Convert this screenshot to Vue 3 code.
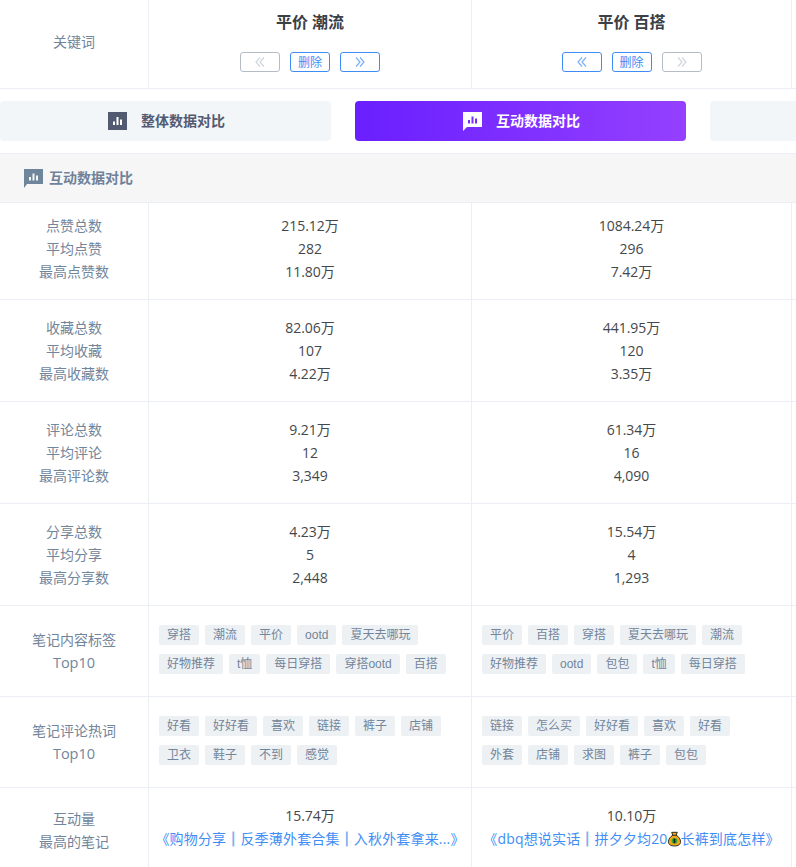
<template>
  <div class="page">
    <div class="row head-row">
      <div class="label">关键词</div>
      <div v-for="(k, i) in keywords" :key="k" class="cell head-cell">
        <div class="kw-title">{{ k }}</div>
        <div class="kw-btns">
          <button class="kw-btn" :class="{ off: i === 0 }">
            <svg viewBox="0 0 10 10" width="10" height="10"><path d="M5 .5 1 5l4 4.500M9 .5 5 5l4 4.500" /></svg>
          </button>
          <button class="kw-btn">删除</button>
          <button class="kw-btn" :class="{ off: i === 1 }">
            <svg viewBox="0 0 10 10" width="10" height="10"><path d="M1 .5 5 5 1 9.500M5 .5 9 5 5 9.500" /></svg>
          </button>
        </div>
      </div>
      <div class="cell"></div>
    </div>

    <div class="tabs">
      <div class="tab">
        <svg class="tab-icon" viewBox="0 0 19 18"><rect width="19" height="18" fill="#525a72" /><path d="M5 9.500h2V13H5zM8.500 5h2v8h-2zM12 7.500h2V13h-2z" fill="#fff" /></svg>
        <span>整体数据对比</span>
      </div>
      <div class="tab active">
        <svg class="tab-icon" viewBox="0 0 19 19"><path d="M0 0h19v15H4l-4 4z" fill="#fff" /><path d="M5 8h2v3.500H5zM8.500 4.500h2v7h-2zM12 6.500h2v5h-2z" fill="#7a2dff" /></svg>
        <span>互动数据对比</span>
      </div>
      <div class="tab"></div>
    </div>

    <div class="section">
      <svg class="section-icon" viewBox="0 0 19 19"><path d="M0 0h19v15H3l-3 4z" fill="#6f859c" /><path d="M5 8h2v3.500H5zM8.500 4.500h2v7h-2zM12 6.500h2v5h-2z" fill="#f6f6f7" /></svg>
      <span>互动数据对比</span>
    </div>

    <div v-for="(s, i) in stats" :key="s.labels[0]" class="row stat-row" :class="{ first: i === 0 }">
      <div class="label"><div v-for="l in s.labels" :key="l">{{ l }}</div></div>
      <div class="cell value"><div v-for="v in s.a" :key="v">{{ v }}</div></div>
      <div class="cell value"><div v-for="v in s.b" :key="v">{{ v }}</div></div>
      <div class="cell"></div>
    </div>

    <div v-for="t in tagRows" :key="t.label" class="row tag-row">
      <div class="label"><div>{{ t.label }}</div><div class="top10">Top10</div></div>
      <div class="cell tags"><span v-for="x in t.a" :key="x" class="tag">{{ x }}</span></div>
      <div class="cell tags"><span v-for="x in t.b" :key="x" class="tag">{{ x }}</span></div>
      <div class="cell"></div>
    </div>

    <div class="row note-row">
      <div class="label"><div>互动量</div><div>最高的笔记</div></div>
      <div class="cell note">
        <div>15.74万</div>
        <a class="note-link">《购物分享<b>｜</b>反季薄外套合集<b>｜</b>入秋外套拿来...》</a>
      </div>
      <div class="cell note">
        <div>10.10万</div>
        <a class="note-link">《dbq想说实话<b>｜</b>拼夕夕均20<svg class="bag" viewBox="0 0 14 16"><path d="M4 .8h6L8.800 4c3 1.500 4.700 4.400 4.700 7 0 3-2.400 4.500-6.500 4.500S.5 14 .5 11c0-2.600 1.700-5.500 4.700-7z" fill="#f0a818" stroke="#222" /><path d="M4.800 4h4.400" stroke="#222" /><circle cx="7" cy="10" r="3.200" fill="#3aa536" /><path d="M8.300 8.500H6.200v1.500h1.600v1.500H5.700M7 7.500v5" stroke="#1d1d1d" stroke-width=".8" fill="none" /></svg>长裤到底怎样》</a>
      </div>
      <div class="cell"></div>
    </div>
  </div>
</template>

<script setup>
const keywords = ['平价 潮流', '平价 百搭']

const stats = [
  { labels: ['点赞总数', '平均点赞', '最高点赞数'], a: ['215.12万', '282', '11.80万'], b: ['1084.24万', '296', '7.42万'] },
  { labels: ['收藏总数', '平均收藏', '最高收藏数'], a: ['82.06万', '107', '4.22万'], b: ['441.95万', '120', '3.35万'] },
  { labels: ['评论总数', '平均评论', '最高评论数'], a: ['9.21万', '12', '3,349'], b: ['61.34万', '16', '4,090'] },
  { labels: ['分享总数', '平均分享', '最高分享数'], a: ['4.23万', '5', '2,448'], b: ['15.54万', '4', '1,293'] }
]

const tagRows = [
  {
    label: '笔记内容标签',
    a: ['穿搭', '潮流', '平价', 'ootd', '夏天去哪玩', '好物推荐', 't恤', '每日穿搭', '穿搭ootd', '百搭'],
    b: ['平价', '百搭', '穿搭', '夏天去哪玩', '潮流', '好物推荐', 'ootd', '包包', 't恤', '每日穿搭']
  },
  {
    label: '笔记评论热词',
    a: ['好看', '好好看', '喜欢', '链接', '裤子', '店铺', '卫衣', '鞋子', '不到', '感觉'],
    b: ['链接', '怎么买', '好好看', '喜欢', '好看', '外套', '店铺', '求图', '裤子', '包包']
  }
]
</script>

<style>
html, body {
  margin: 0;
  background: #fff;
}
</style>

<style scoped>
.page {
  width: 796px;
  height: 867px;
  overflow: hidden;
  font-family: "Open Sans", "Noto Sans CJK SC", sans-serif;
  font-size: 14px;
  line-height: 23px;
  color: #44484c;
}
.row {
  display: grid;
  grid-template-columns: 149px 323px 320px 323px;
  border-bottom: 1px solid #eceef5;
}
.label {
  display: flex;
  flex-direction: column;
  justify-content: center;
  align-items: center;
  color: #71859b;
  border-right: 1px solid #eceef5;
}
.cell {
  border-right: 1px solid #eceef5;
}
.head-row {
  height: 88px;
}
.head-row .label {
  padding-bottom: 6px;
}
.head-cell {
  text-align: center;
}
.kw-title {
  padding-top: 11px;
  font-size: 16px;
  font-weight: 700;
  color: #3a4046;
}
.kw-btns {
  display: flex;
  justify-content: center;
  gap: 10px;
  margin-top: 18px;
}
.kw-btn {
  width: 40px;
  height: 20px;
  padding: 0;
  display: flex;
  align-items: center;
  justify-content: center;
  background: #fff;
  border: 1px solid #3f8cf5;
  border-radius: 3px;
  font-family: inherit;
  font-size: 12px;
  color: #3f8cf5;
}
.kw-btn svg path {
  fill: none;
  stroke: #7ab0fa;
  stroke-width: 1.2;
}
.kw-btn.off {
  border-color: #b4bcc8;
}
.kw-btn.off svg path {
  stroke: #cfd5dc;
}
.tabs {
  display: flex;
  gap: 24px;
  padding: 12px 0;
  border-bottom: 1px solid #eceef5;
}
.tab {
  flex: 0 0 331px;
  height: 40px;
  display: flex;
  align-items: center;
  justify-content: center;
  gap: 14px;
  box-sizing: border-box;
  padding-left: 2px;
  background: #f3f6f9;
  border-radius: 4px;
  font-size: 14px;
  font-weight: 700;
  color: #535b72;
}
.tab span {
  margin-bottom: 2px;
}
.tab.active {
  background: linear-gradient(90deg, #691fff, #9540ff);
  color: #fff;
}
.tab-icon {
  width: 19px;
  height: 18px;
}
.active .tab-icon {
  height: 19px;
}
.section {
  height: 48px;
  display: flex;
  align-items: center;
  gap: 6px;
  padding-left: 24px;
  background: #f6f6f7;
  border-bottom: 1px solid #eceef5;
  font-weight: 700;
  color: #6f8299;
}
.section span {
  margin-bottom: 2px;
}
.section-icon {
  width: 19px;
  height: 19px;
}
.stat-row .label,
.stat-row .value {
  justify-content: flex-start;
  padding: 16px 0;
  text-align: center;
}
.stat-row.first .label,
.stat-row.first .value {
  padding: 11px 0 16px;
}
.tag-row {
  height: 90px;
}
.top10 {
  font-size: 14.5px;
}
.tags {
  display: flex;
  flex-wrap: wrap;
  align-content: flex-start;
  gap: 9px 6px;
  padding: 19px 20px 0 10px;
}
.tag {
  height: 20px;
  line-height: 20px;
  padding: 0 8px;
  background: #eef1f4;
  border-radius: 2px;
  font-family: "Liberation Sans", "Noto Sans CJK SC", sans-serif;
  font-size: 12px;
  color: #71859b;
}
.note-row {
  height: 79px;
  border-bottom: 0;
}
.note-row .label {
  padding-top: 5px;
}
.note {
  padding-top: 16px;
  text-align: center;
  white-space: nowrap;
}
.note-link {
  color: #3f8ef5;
  letter-spacing: 0.17px;
}
.note-link b {
  font-weight: 400;
  color: #7fb0f7;
  -webkit-text-stroke: 1px #7fb0f7;
}
.bag {
  width: 13px;
  height: 16px;
  vertical-align: -3px;
}
</style>
